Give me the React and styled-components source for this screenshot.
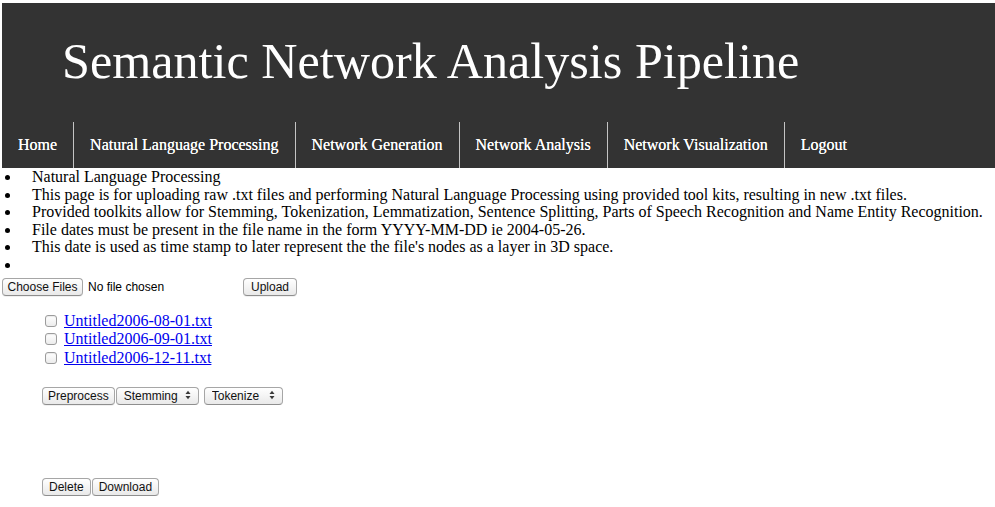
import React from "react";
import styled, { createGlobalStyle } from "styled-components";

const GlobalStyle = createGlobalStyle`
  html, body {
    background: #ffffff;
  }
  body {
    margin: 3px 0 0 2px;
    font-family: "Liberation Serif", "Times New Roman", serif;
    font-size: 16px;
    color: #000000;
  }
`;

const Header = styled.header`
  background-color: #333333;
  color: #ffffff;
`;

const Title = styled.h1`
  margin: 0;
  padding: 30px 60px 32px;
  font-size: 50.2px;
  font-weight: normal;
  line-height: 57px;
`;

const NavList = styled.ul`
  display: flex;
  margin: 0;
  padding: 0;
  list-style: none;
`;

const NavItem = styled.li`
  padding: 14px 16px;
  font-size: 16px;
  line-height: 18px;
  border-left: ${(p) => (p.$first ? "none" : "1px solid #c4c4c4")};
  text-shadow: 0 0 0.6px #ffffff;
  cursor: pointer;
`;

const InfoList = styled.ul`
  margin: 0;
  padding: 0;
  list-style: none;
  font-size: 16px;
  line-height: 17.6px;
`;

const InfoItem = styled.li`
  display: flex;
  min-height: 17.6px;

  &::before {
    content: "";
    flex: 0 0 5px;
    height: 5px;
    margin: 7px 22px 0 3px;
    border-radius: 50%;
    background: #000000;
  }
`;

const UploadRow = styled.div`
  display: flex;
  align-items: center;
  margin-top: 4px;
  height: 18px;
`;

const FileBox = styled.div`
  display: flex;
  align-items: center;
  width: 238px;
`;

const FileLabel = styled.span`
  margin-left: 5px;
  font-family: "Liberation Sans", Arial, sans-serif;
  font-size: 12px;
`;

const Button = styled.button`
  height: 18px;
  margin: 0 ${(p) => p.$gap || 0}px 0 0;
  padding: 0 ${(p) => p.$pad || 7}px;
  font-family: "Liberation Sans", Arial, sans-serif;
  font-size: 12px;
  line-height: 16px;
  color: #111111;
  background: linear-gradient(#ffffff, #f4f4f4 50%, #e9e9e9);
  border: 1px solid #a6a6a6;
  border-bottom-color: #8e8e8e;
  border-radius: 4px;
  box-shadow: 0 1px 0 rgba(0, 0, 0, 0.06);
  cursor: pointer;
`;

const FileList = styled.div`
  margin-top: 16px;
  padding-left: 40px;
`;

const FileRow = styled.div`
  display: flex;
  align-items: center;
  height: 18.5px;
`;

const Check = styled.input`
  appearance: none;
  width: 12px;
  height: 12px;
  margin: 0 7px 0 3px;
  border: 1px solid #9c9c9c;
  border-radius: 3px;
  background: linear-gradient(#ffffff, #ececec);
  box-shadow: inset 0 1px 1px rgba(0, 0, 0, 0.08);
`;

const FileLink = styled.a`
  color: #0000ee;
  text-decoration: underline;
  font-size: 16px;
  line-height: 18px;
`;

const ActionRow = styled.div`
  display: flex;
  align-items: center;
  padding-left: 40px;
  margin-top: ${(p) => p.$top}px;
`;

const SelectWrap = styled.div`
  position: relative;
  margin-right: ${(p) => p.$gap || 0}px;
`;

const Select = styled.select`
  appearance: none;
  width: ${(p) => p.$w}px;
  height: 18px;
  padding: 0 0 0 7px;
  font-family: "Liberation Sans", Arial, sans-serif;
  font-size: 12px;
  color: #111111;
  background: linear-gradient(#ffffff, #f4f4f4 50%, #e9e9e9);
  border: 1px solid #a6a6a6;
  border-bottom-color: #8e8e8e;
  border-radius: 4px;
  outline: none;
`;

const Arrows = styled.svg`
  position: absolute;
  right: 8px;
  top: 4px;
  pointer-events: none;
`;

const ArrowIcon = () => (
  <Arrows width="6" height="10" viewBox="0 0 6 10">
    <polygon points="0.5,4 3,0.8 5.5,4" fill="#3a3a3a" />
    <polygon points="0.5,6 3,9.2 5.5,6" fill="#3a3a3a" />
  </Arrows>
);

const navItems = [
  "Home",
  "Natural Language Processing",
  "Network Generation",
  "Network Analysis",
  "Network Visualization",
  "Logout",
];

const infoItems = [
  "Natural Language Processing",
  "This page is for uploading raw .txt files and performing Natural Language Processing using provided tool kits, resulting in new .txt files.",
  "Provided toolkits allow for Stemming, Tokenization, Lemmatization, Sentence Splitting, Parts of Speech Recognition and Name Entity Recognition.",
  "File dates must be present in the file name in the form YYYY-MM-DD ie 2004-05-26.",
  "This date is used as time stamp to later represent the the file's nodes as a layer in 3D space.",
  "",
];

const files = [
  "Untitled2006-08-01.txt",
  "Untitled2006-09-01.txt",
  "Untitled2006-12-11.txt",
];

export default function App() {
  return (
    <>
      <GlobalStyle />
      <Header>
        <Title>Semantic Network Analysis Pipeline</Title>
        <NavList>
          {navItems.map((item, i) => (
            <NavItem key={item} $first={i === 0}>
              {item}
            </NavItem>
          ))}
        </NavList>
      </Header>

      <InfoList>
        {infoItems.map((text, i) => (
          <InfoItem key={i}>{text}</InfoItem>
        ))}
      </InfoList>

      <UploadRow>
        <FileBox>
          <Button $pad={4.5}>Choose Files</Button>
          <FileLabel>No file chosen</FileLabel>
        </FileBox>
        <Button $pad={7} style={{ marginLeft: 3 }}>Upload</Button>
      </UploadRow>

      <FileList>
        {files.map((f) => (
          <FileRow key={f}>
            <Check type="checkbox" />
            <FileLink href="#">{f}</FileLink>
          </FileRow>
        ))}
      </FileList>

      <ActionRow $top={19}>
        <Button $pad={5} $gap={1}>Preprocess</Button>
        <SelectWrap $gap={5}>
          <Select $w={83} defaultValue="Stemming">
            <option>Stemming</option>
            <option>Lemmatization</option>
          </Select>
          <ArrowIcon />
        </SelectWrap>
        <SelectWrap>
          <Select $w={79} defaultValue="Tokenize">
            <option>Tokenize</option>
            <option>Sentence Split</option>
          </Select>
          <ArrowIcon />
        </SelectWrap>
      </ActionRow>

      <ActionRow $top={73}>
        <Button $pad={6} $gap={1}>Delete</Button>
        <Button $pad={6}>Download</Button>
      </ActionRow>
    </>
  );
}
